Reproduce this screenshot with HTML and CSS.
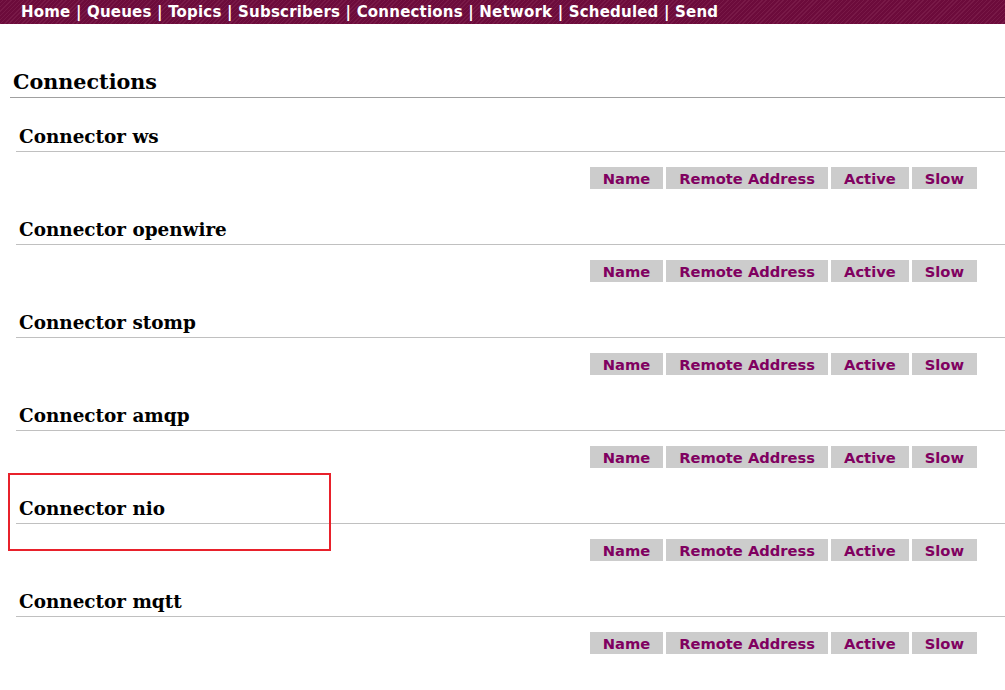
FILE: index.html
```html
<!DOCTYPE html>
<html>
<head>
<meta charset="utf-8">
<link rel="stylesheet" href="styles.css">
</head>
<body>
<div class="nav">
  <a href="#">Home</a> | <a href="#">Queues</a> | <a href="#">Topics</a> | <a href="#">Subscribers</a> | <a href="#">Connections</a> | <a href="#">Network</a> | <a href="#">Scheduled</a> | <a href="#">Send</a>
</div>
<div class="content">
  <h2 class="page-title">Connections</h2>

  <div class="connector">
    <h3>Connector ws</h3>
    <div class="table-row">
      <table class="conn-table"><thead><tr><th>Name</th><th>Remote Address</th><th>Active</th><th>Slow</th></tr></thead></table>
    </div>
  </div>

  <div class="connector">
    <h3>Connector openwire</h3>
    <div class="table-row">
      <table class="conn-table"><thead><tr><th>Name</th><th>Remote Address</th><th>Active</th><th>Slow</th></tr></thead></table>
    </div>
  </div>

  <div class="connector">
    <h3>Connector stomp</h3>
    <div class="table-row">
      <table class="conn-table"><thead><tr><th>Name</th><th>Remote Address</th><th>Active</th><th>Slow</th></tr></thead></table>
    </div>
  </div>

  <div class="connector">
    <h3>Connector amqp</h3>
    <div class="table-row">
      <table class="conn-table"><thead><tr><th>Name</th><th>Remote Address</th><th>Active</th><th>Slow</th></tr></thead></table>
    </div>
  </div>

  <div class="connector">
    <h3>Connector nio</h3>
    <div class="table-row">
      <table class="conn-table"><thead><tr><th>Name</th><th>Remote Address</th><th>Active</th><th>Slow</th></tr></thead></table>
    </div>
  </div>

  <div class="connector">
    <h3>Connector mqtt</h3>
    <div class="table-row">
      <table class="conn-table"><thead><tr><th>Name</th><th>Remote Address</th><th>Active</th><th>Slow</th></tr></thead></table>
    </div>
  </div>
</div>
<div class="highlight"></div>
</body>
</html>
```

FILE: styles.css
```css
html, body {
  margin: 0;
  padding: 0;
  background: #fff;
}
body {
  position: relative;
  width: 1005px;
  height: 690px;
  overflow: hidden;
}
.nav {
  height: 24px;
  line-height: 25px;
  padding-left: 21px;
  color: #fff;
  font-family: "DejaVu Sans", Verdana, sans-serif;
  font-weight: bold;
  font-size: 15px;
  letter-spacing: 0.2px;
  white-space: nowrap;
  background-color: #6c0b3b;
  background-image: repeating-linear-gradient(-45deg, #6c0b3b 0px, #6c0b3b 2px, #781947 2px, #781947 3px);
}
.nav a {
  color: #fff;
  text-decoration: none;
}
.content {
  padding-left: 10px;
}
.page-title {
  margin: 0;
  margin-top: 43px;
  padding-left: 3px;
  font-family: "DejaVu Serif", Georgia, serif;
  font-weight: bold;
  font-size: 20.7px;
  line-height: 30px;
  color: #000;
  border-bottom: 1px solid #a0a0a0;
}
.connector {
  padding-left: 6px;
}
.connector h3 {
  margin: 0;
  margin-top: 23px;
  padding-left: 3px;
  font-family: "DejaVu Serif", Georgia, serif;
  font-weight: bold;
  font-size: 18.4px;
  line-height: 29px;
  color: #000;
  border-bottom: 1px solid #c0c0c0;
}
.connector:first-of-type h3 {
  margin-top: 24px;
}
.table-row {
  display: flex;
  justify-content: flex-end;
  padding-right: 25px;
  margin-top: 12px;
}
.conn-table {
  border-collapse: separate;
  border-spacing: 3px;
}
.conn-table th {
  background: #cccccc;
  color: #800060;
  font-family: "DejaVu Sans", Verdana, sans-serif;
  font-weight: bold;
  font-size: 14.7px;
  height: 22px;
  padding: 0 13px;
  text-align: center;
  white-space: nowrap;
}
.highlight {
  position: absolute;
  left: 8px;
  top: 473px;
  width: 319px;
  height: 74px;
  border: 2px solid #e8212b;
}
```
